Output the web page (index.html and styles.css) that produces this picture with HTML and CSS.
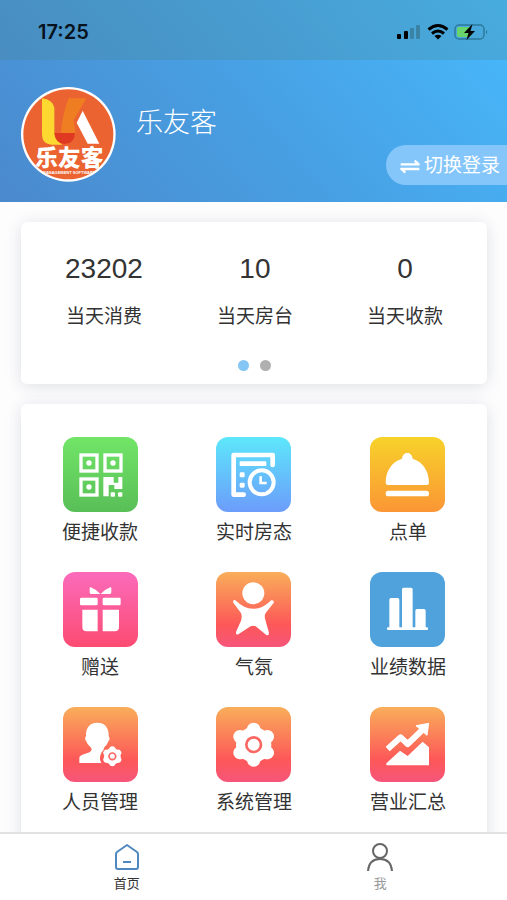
FILE: index.html
```html
<!DOCTYPE html>
<html lang="zh-CN">
<head>
<meta charset="utf-8">
<meta name="viewport" content="width=device-width, initial-scale=1">
<title>乐友客</title>
<link rel="stylesheet" href="styles.css">
</head>
<body>
<div class="app">
  <header class="header">
    <div class="status">
      <span class="status-time">17:25</span>
      <svg class="status-icons" viewBox="0 0 92 18" aria-hidden="true">
        <rect x="0" y="11" width="4" height="5" rx="1"/>
        <rect x="7" y="8" width="4" height="8" rx="1"/>
        <rect x="13" y="5" width="4" height="11" rx="1" fill="#3b83a5"/>
        <rect x="19" y="2" width="4" height="14" rx="1" fill="#3b83a5"/>
        <g fill="none" stroke="#000" stroke-width="3">
          <path d="M31.500 6.500Q41 -1.500 50.500 6.500"/>
          <path d="M35 10.500Q41 5.500 47 10.500"/>
        </g>
        <path d="M37.500 13Q41 10.500 44.500 13L41 16.500Z"/>
        <rect x="58" y="2" width="29" height="14" rx="4" fill="none" stroke="#2d789b" stroke-width="1.500"/>
        <rect x="60" y="4" width="14" height="10" rx="2" fill="#69d46c"/>
        <path d="M89 7Q91.500 9 89 11Z" fill="#2d789b"/>
        <path d="M75.500 1L67 10H71.500L69.500 17L78 8H73.500Z"/>
      </svg>
    </div>
    <div class="profile">
      <svg class="avatar" viewBox="0 0 285 285" role="img" aria-label="乐友客">
        <defs><clipPath id="disc"><circle cx="142" cy="142" r="136"/></clipPath></defs>
        <circle cx="142" cy="142" r="142" fill="#fff"/>
        <circle cx="142" cy="142" r="135" fill="#eb6330"/>
        <path d="M63 34Q95 38 100 62V137Q102 160 124 173H92Q63 172 63 142Z" fill="#fcd831"/>
        <path d="M143 34H196L158 100L164 140H119Q124 84 143 34Z" fill="#ef7d22"/>
        <path d="M100 138H162Q160 171 131 171Q103 169 100 138Z" fill="#df3a21"/>
        <path d="M185 71L235 170H200L167 107Z" fill="#fff"/>
        <g clip-path="url(#disc)">
          <text class="logo-name" x="145" y="238" text-anchor="middle">乐友客</text>
          <text class="logo-sub" x="144" y="262" text-anchor="middle">MANAGEMENT SOFTWARE</text>
        </g>
      </svg>
      <h1 class="name">乐友客</h1>
      <button class="switch" type="button">
        <svg viewBox="0 0 60 45" aria-hidden="true"><path d="M2 16H56L44 5M58 30H4L16 41" fill="none" stroke="#fff" stroke-width="7" stroke-linejoin="round"/></svg>
        切换登录
      </button>
    </div>
  </header>

  <main class="main">
    <section class="card">
      <dl class="stats">
        <div class="stat"><dt>当天消费</dt><dd>23202</dd></div>
        <div class="stat"><dt>当天房台</dt><dd>10</dd></div>
        <div class="stat"><dt>当天收款</dt><dd>0</dd></div>
      </dl>
      <div class="dots"><span class="dot dot-on"></span><span class="dot"></span></div>
    </section>

    <nav class="card menu" aria-label="功能">
      <a class="item" href="#pay">
        <svg class="tile green" viewBox="0 0 225 225" aria-hidden="true">
          <g fill="none" stroke="#fff" stroke-width="10"><rect x="54" y="54" width="48" height="48"/><rect x="126" y="54" width="48" height="48"/><rect x="54" y="126" width="48" height="48"/></g>
          <circle cx="78" cy="78" r="8"/><circle cx="150" cy="78" r="8"/><circle cx="78" cy="150" r="8"/>
          <path d="M121 120H152V137H166V120H178V156H154V144H137V178H121Z"/>
          <rect x="143" y="166" width="13" height="13" rx="3"/><rect x="165" y="166" width="13" height="13" rx="3"/>
        </svg>
        便捷收款
      </a>
      <a class="item" href="#rooms">
        <svg class="tile cyan" viewBox="0 0 225 225" aria-hidden="true">
          <path d="M170 84V54H53V173H83" fill="none" stroke="#fff" stroke-width="14" stroke-linecap="round" stroke-linejoin="round"/>
          <rect x="71" y="73" width="80" height="14" rx="2"/>
          <rect x="71" y="106" width="15" height="15" rx="4"/><rect x="71" y="137" width="15" height="15" rx="4"/>
          <circle cx="137" cy="136" r="36" fill="none" stroke="#fff" stroke-width="12"/>
          <path d="M134 118V138H152" fill="none" stroke="#fff" stroke-width="8"/>
        </svg>
        实时房态
      </a>
      <a class="item" href="#order">
        <svg class="tile yellow" viewBox="0 0 225 225" aria-hidden="true">
          <path d="M96 65C98 42 126 42 128 65C158 74 177 101 177 137Q177 144 170 144H54Q47 144 47 137C47 101 66 74 96 65Z"/>
          <rect x="47" y="161" width="130" height="17" rx="8"/>
        </svg>
        点单
      </a>
      <a class="item" href="#gift">
        <svg class="tile pink" viewBox="0 0 225 225" aria-hidden="true">
          <path d="M83 46Q101 53 112 66H84Q80 66 80 61V49Q80 45 83 46ZM142 46Q124 53 113 66H141Q145 66 145 61V49Q145 45 142 46Z"/>
          <rect x="51" y="77" width="53" height="23" rx="4"/><rect x="119" y="77" width="54" height="23" rx="4"/>
          <path d="M58 113H104V178H71Q58 178 58 165ZM119 113H168V165Q168 178 155 178H119Z"/>
        </svg>
        赠送
      </a>
      <a class="item" href="#mood">
        <svg class="tile coral" viewBox="0 0 225 225" aria-hidden="true">
          <circle cx="112" cy="64" r="33"/>
          <path d="M60 86Q84 110 112 110T164 86C170 81 177 89 172 94L149 123Q144 130 148 143L159 182Q158 194 150 188L119 163Q112 159 104 163L67 187Q57 190 61 178L75 146Q79 133 75 123L52 92C49 85 56 82 60 86Z"/>
        </svg>
        气氛
      </a>
      <a class="item" href="#performance">
        <svg class="tile blue" viewBox="0 0 225 225" aria-hidden="true">
          <path d="M58 170V83Q58 78 63 78H83Q88 78 88 83V170ZM96 170V52Q96 47 101 47H123Q128 47 128 52V170ZM136 170V116Q136 111 141 111H162Q167 111 167 116V170Z"/>
          <rect x="51" y="166" width="123" height="8" rx="3"/>
        </svg>
        业绩数据
      </a>
      <a class="item" href="#staff">
        <svg class="tile coral" viewBox="0 0 225 225" aria-hidden="true">
          <path d="M103 47C128 47 138 66 137 87Q143 96 136 103C132 117 122 119 122 128Q109 141 111 158L115 168H49V155C49 137 83 144 86 127C85 118 74 117 70 103Q63 96 69 87C68 66 78 47 103 47Z"/>
          <g stroke="#fff" stroke-width="18" stroke-linecap="round"><path d="M148 127V169M130 137L166 158M166 137L130 158"/></g>
          <circle cx="148" cy="148" r="25"/>
          <circle cx="148" cy="148" r="10" fill="none" stroke="#f96763" stroke-width="5"/>
        </svg>
        人员管理
      </a>
      <a class="item" href="#system">
        <svg class="tile coral" viewBox="0 0 225 225" aria-hidden="true">
          <g stroke="#fff" stroke-width="40" stroke-linecap="round"><path d="M113 67V159M72 89L154 137M154 89L72 137"/></g>
          <circle cx="113" cy="113" r="53"/>
          <circle cx="113" cy="113" r="22" fill="none" stroke="#f96763" stroke-width="8"/>
        </svg>
        系统管理
      </a>
      <a class="item" href="#summary">
        <svg class="tile coral" viewBox="0 0 225 225" aria-hidden="true">
          <path d="M53 126L92 91L113 111L160 66" fill="none" stroke="#fff" stroke-width="18" stroke-linejoin="round"/>
          <path d="M138 56L176 49L171 85Z" stroke="#fff" stroke-width="3" stroke-linejoin="round"/>
          <path d="M49 174V169L90 131L113 147L158 104L177 121V175H50Z"/>
        </svg>
        营业汇总
      </a>
    </nav>
  </main>

  <nav class="tabs" aria-label="主导航">
    <a class="tab tab-on" href="#home" aria-current="page">
      <svg viewBox="0 0 28 28" aria-hidden="true"><path d="M14 2L24 9Q25 10 25 11V24Q25 26 23 26H5Q3 26 3 24V11Q3 10 4 9ZM10 19H18" fill="none" stroke="#5089c0" stroke-width="2" stroke-linejoin="round"/></svg>
      首页
    </a>
    <a class="tab" href="#me">
      <svg viewBox="0 0 28 28" aria-hidden="true"><g fill="none" stroke="#666" stroke-width="2"><circle cx="14" cy="8" r="7"/><path d="M2 28Q3 16 14 16T26 28"/></g></svg>
      我
    </a>
  </nav>
</div>
</body>
</html>
```
FILE: styles.css
```css
* { box-sizing: border-box; }

body {
  margin: 0;
  background: #fdfdfe;
  color: #333;
  font-family: "Liberation Sans", "Noto Sans CJK SC", sans-serif;
  font-size: 19px;
  line-height: 28px;
}

a { color: inherit; text-decoration: none; }
svg { display: block; fill: #fff; }

.app {
  display: flex;
  flex-direction: column;
  height: 100vh;
}

.header {
  background: linear-gradient(50deg, #4b89cd 0%, #479fe2 48%, #47b9fc 100%);
  color: #fff;
}

.status {
  display: flex;
  align-items: center;
  justify-content: space-between;
  height: 60px;
  padding: 4px 18px 0 38px;
  background: rgba(75, 130, 130, 0.24);
}

.status-time {
  color: #07121c;
  font-family: Inter, sans-serif;
  font-size: 20px;
  font-weight: 600;
}

.status-icons { width: 92px; height: 18px; fill: #000; }

.profile {
  display: flex;
  align-items: flex-start;
  padding: 27px 0 17px 21px;
}

.avatar { width: 95px; height: 95px; }

.logo-name {
  font: 900 68px "Noto Sans CJK SC", sans-serif;
}

.logo-sub {
  font: bold 12px "Liberation Sans", sans-serif;
}

.name {
  flex: 1;
  margin: 16px 0 0 20px;
  font-size: 27px;
  font-weight: 300;
  line-height: 40px;
}

.switch {
  display: flex;
  align-items: center;
  gap: 4px;
  height: 40px;
  margin-top: 58px;
  padding: 2px 7px 0 14px;
  border: 0;
  border-radius: 20px 0 0 20px;
  background: #84c6fa;
  color: #fff;
  font: inherit;
}

.switch svg { width: 20px; height: 15px; }

.main {
  flex: 1;
  min-height: 0;
  padding: 20px 20px 20px 21px;
  overflow-y: auto;
  scrollbar-width: none;
}

.card {
  border-radius: 6px;
  background: #fff;
  box-shadow: 0 2px 16px rgba(50, 55, 75, 0.15);
}

.stats {
  display: flex;
  justify-content: space-between;
  margin: 0;
  padding: 33px 44px 29px;
}

.stat {
  display: flex;
  flex-direction: column-reverse;
  gap: 20px;
  text-align: center;
}

.stat dd { margin: 0; font-size: 28px; }

.dots {
  display: flex;
  justify-content: center;
  gap: 11px;
  padding-bottom: 13px;
}

.dot {
  width: 11px;
  height: 11px;
  border-radius: 50%;
  background: #b0b0b0;
}

.dot-on { background: #84c6f4; }

.menu {
  display: grid;
  grid-template-columns: repeat(3, max-content);
  justify-content: space-between;
  row-gap: 25px;
  margin-top: 20px;
  padding: 33px 41px;
}

.item {
  display: flex;
  flex-direction: column;
  align-items: center;
  gap: 7px;
}

.tile { width: 75px; height: 75px; border-radius: 12px; }
.green { background: linear-gradient(#72e568, #58bf57); }
.cyan { background: linear-gradient(#5de7fb, #6c9cfb); }
.yellow { background: linear-gradient(#f7d22a, #fb9635); }
.pink { background: linear-gradient(#fb6bbb, #fc4b72); }
.coral { background: linear-gradient(#f9ae5a, #fd5858 70%, #f6557a); }
.blue { background: #4fa2dc; }

.tabs {
  position: relative;
  display: flex;
  border-top: 2px solid #e2e2e4;
  background: #fff;
}

.tab {
  display: flex;
  flex: 1;
  flex-direction: column;
  align-items: center;
  gap: 3px;
  padding: 9px 0 6px;
  color: #999;
  font-size: 13px;
  line-height: 20px;
}

.tab svg { width: 28px; height: 28px; }
.tab-on { color: #333; }
```
